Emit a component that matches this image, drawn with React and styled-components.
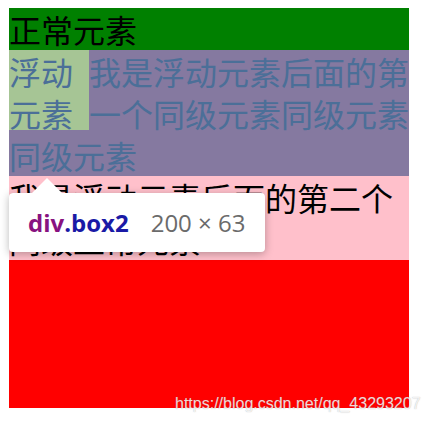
import React from 'react';
import styled, { createGlobalStyle } from 'styled-components';

const GlobalStyle = createGlobalStyle`
  html, body {
    margin: 0;
    padding: 0;
    background: #fff;
  }
  body {
    font-family: "Noto Sans CJK SC", "Noto Sans", sans-serif;
  }
`;

const Page = styled.div`
  position: relative;
  width: 428px;
  height: 428px;
  padding: 8px 0 0 9px;
  box-sizing: border-box;
  overflow: hidden;
`;

const Stack = styled.div`
  width: 400px;
  font-size: 32px;
  line-height: 42px;
`;

const Block = styled.div`
  background: ${(p) => p.bg};
  color: ${(p) => p.color || '#000'};
  height: ${(p) => (p.h ? `${p.h}px` : 'auto')};
  overflow: visible;
`;

const Float = styled.div`
  float: left;
  width: 80px;
  height: 80px;
  background: #a6c595;
  color: #4b6f98;
`;

const Tip = styled.div`
  position: absolute;
  left: 9px;
  top: 193px;
  width: 256px;
  height: 59px;
  background: #fff;
  border-radius: 4px;
  box-shadow: 0 2px 8px rgba(0, 0, 0, 0.28);
  display: flex;
  align-items: center;
  gap: 22px;
  padding: 0 0 0 19px;
  box-sizing: border-box;
  font-family: "Open Sans", "Noto Sans", sans-serif;
  font-size: 24px;

  &::before {
    content: '';
    position: absolute;
    left: 23px;
    top: -15px;
    border-left: 15px solid transparent;
    border-right: 15px solid transparent;
    border-bottom: 15px solid #fff;
  }
`;

const TagName = styled.span`
  font-weight: 700;
  color: ${(p) => p.color};
`;

const Size = styled.span`
  color: #6b6b6b;
`;

const Mark = styled.div`
  position: absolute;
  left: 175px;
  top: 395px;
  font-family: "Liberation Sans", Arial, sans-serif;
  font-size: 16px;
  color: rgba(255, 255, 255, 0.82);
  text-shadow: 0 0 1px rgba(110, 110, 110, 0.55);
  white-space: nowrap;
`;

export default function App() {
  return (
    <>
      <GlobalStyle />
      <Page>
        <Stack>
          <Block bg="#008000">正常元素</Block>
          <Block bg="#8579a0" color="#4b6f98">
            <Float>浮动元素</Float>
            我是浮动元素后面的第一个同级元素同级元素同级元素
          </Block>
          <Block bg="#ffc0cb">我是浮动元素后面的第二个同级正常元素</Block>
          <Block bg="#ff0000" h={148} />
        </Stack>
        <Tip>
          <span>
            <TagName color="#881280">div</TagName>
            <TagName color="#1a1aa6">.box2</TagName>
          </span>
          <Size>200 × 63</Size>
        </Tip>
        <Mark>https://blog.csdn.net/qq_43293207</Mark>
      </Page>
    </>
  );
}
